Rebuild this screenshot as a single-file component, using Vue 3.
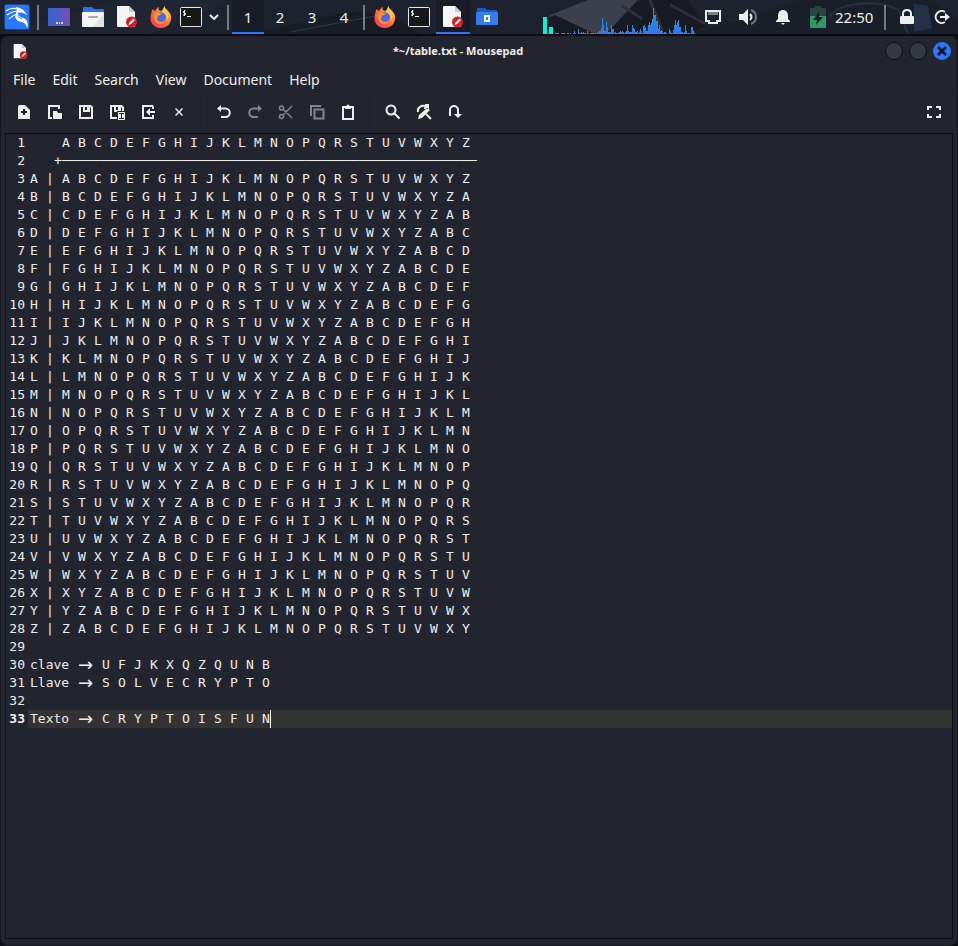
<script setup>
const alphabet = 'ABCDEFGHIJKLMNOPQRSTUVWXYZ'.split('')

const shifted = alphabet.map((letter, i) => ({
  kind: 'row',
  cells: [letter, '|', ...alphabet.slice(i), ...alphabet.slice(0, i)],
}))

const lines = [
  { kind: 'row', cells: ['', '', ...alphabet] },
  { kind: 'rule' },
  ...shifted,
  { kind: 'blank' },
  { kind: 'phrase', word: 'clave', cells: 'UFJKXQZQUNB'.split('') },
  { kind: 'phrase', word: 'Llave', cells: 'SOLVECRYPTO'.split('') },
  { kind: 'blank' },
  { kind: 'phrase', word: 'Texto', cells: 'CRYPTOISFUN'.split(''), current: true },
]
const rule = '─'.repeat(53)

const menus = ['File', 'Edit', 'Search', 'View', 'Document', 'Help']
const workspaces = [1, 2, 3, 4]

// One base-36 digit per audio band, in pixels of bar height
const bands = (
  '11010013' + '10051121' + '21103101' + '11111021' + '336g933c' + '72229551' +
  '21112323' + '21239322' + '29652231' + '25318973' + '39c9bfqj' + 'jdd59343' +
  '12210053' + '1149e9ce' + '77221293' + '11107731'
).split('').map((d) => parseInt(d, 36))

const tools = [
  [
    { name: 'New', d: 'M3 1h6l5 5v9H2V2zM7 5v2H5v2h2v2h2V9h2V7H9V5z' },
    { name: 'Open', d: 'M1 1h12v4h-2V3H3v10h2v2H1zM6 7h4l1 2h4v6H6z' },
    { name: 'Save', d: 'M1 1h12l2 2v12H1zM3 3v10h10V4l-1-1v5H5V3zM7 3h2v3H7z' },
    { name: 'Save As', d: 'M1 1h12l2 2v4h-2V4l-1-1v4H8v1H5V3H3v10h5v2H1zM7 3h2v3H7zM9 8h7v8H9zM10 9v1h2v4h-2v1h5v-1h-2v-4h2V9z' },
    { name: 'Revert', d: 'M2 1h11l1 2v2h-2V3H4v10h8v-2h2v4H2zM6 8l4-4v3h5v2h-5v3z' },
    { name: 'Close', d: 'M4 5l1-1 3 3 3-3 1 1-3 3 3 3-1 1-3-3-3 3-1-1 3-3z' },
  ],
  [
    { name: 'Undo', s: 'M4 4.500h5.500a4 4 0 0 1 0 8.500H5', d: 'M1 4.500L5 1v7z' },
    { name: 'Redo', s: 'M12 4.500H6.500a4 4 0 0 0 0 8.500H11', d: 'M15 4.500L11 1v7z', off: true },
    { name: 'Cut', s: 'M14 2L5 11M5.500 4a2 2 0 1 1-4 0 2 2 0 0 1 4 0M5.500 12.500a2 2 0 1 1-4 0 2 2 0 0 1 4 0M5 5l9 9', off: true, thin: true },
    { name: 'Copy', s: 'M2 12V2h10M5.500 5.500h9v9h-9z', off: true },
    { name: 'Paste', s: 'M3 3h10v12H3z', d: 'M5 2h1.500a1.500 1.500 0 0 1 3 0H11v3H5z' },
  ],
  [
    { name: 'Find', s: 'M10.500 6a4.500 4.500 0 1 1-9 0 4.500 4.500 0 0 1 9 0M9.500 9.500l5 5' },
    { name: 'Find and Replace', s: 'M2 8a5 5 0 0 1 8-5M10 10l5 5', d: 'M11 4l3 2-8 8-4 1 1-4zM9 0h4v5H8z' },
    { name: 'Go to', s: 'M3 12V6a4 4 0 0 1 8 0v6', d: 'M7 10h8l-4 4z' },
  ],
]
</script>

<template>
  <div class="desktop">
    <header class="panel">
      <svg class="wallpaper" viewBox="0 0 958 36" preserveAspectRatio="none" aria-hidden="true">
        <rect width="958" height="36" fill="#1e222e" />
        <path d="M0 36L120 0h110L150 36z" fill="#202532" />
        <path d="M250 36L350 12l40 4 30 20z" fill="#191c24" />
        <path d="M290 34l90-18" stroke="#23404e" />
        <path d="M550 16l38-16h50l-32 36h-60z" fill="#3b404c" />
        <path d="M543 22l12-6 40 20h-45zM638 0h50l18 28-20 8h-80z" fill="#171a22" />
        <path d="M622 6l20 14M650 0l12 32M670 5l35 20" stroke="#2b303c" stroke-width="3" />
        <path d="M690 36l60-18 50-18h130l28 20v16z" fill="#1a1e29" />
        <path d="M830 18c4-14 46-20 68-8l10 26" fill="none" stroke="#22323f" stroke-width="2" />
        <path d="M914 4l14 2 4 24-18 4z" fill="#273049" />
      </svg>

      <button class="slot" aria-label="Applications">
        <svg width="30" height="30" viewBox="0 0 30 30">
          <rect x="2" y="2" width="26" height="26" rx="3" fill="#145fd8" opacity=".5" />
          <rect x="3" y="3" width="24" height="24" rx="1" fill="#2777ff" />
          <path d="M4 9c4-3 8-3 12-2M5 13c4-3 8-4 12-4M7 17c3-3 6-5 10-5" fill="none" stroke="#fff" stroke-width="1.200" />
          <path d="M14 5c4 1 7 2 9 5l2 3-4-2c-3-1-5 0-4 2 1 3 6 2 8 6 1 3 1 5 0 7-1-4-3-6-6-6-5-1-7-5-5-9l1-3z" fill="#fff" />
          <path d="M17 10c-2 3 0 6 3 7" fill="none" stroke="#2777ff" />
        </svg>
      </button>
      <i class="bar"></i>
      <button class="slot" aria-label="Show desktop">
        <svg width="22" height="18" viewBox="0 0 22 18">
          <defs><linearGradient id="screen"><stop stop-color="#3265d0" /><stop offset="1" stop-color="#7650b5" /></linearGradient></defs>
          <rect width="22" height="18" rx="1" fill="url(#screen)" />
          <path d="M8 15h2M11 15h1M13 15h2" stroke="#fff" stroke-width="1.500" />
        </svg>
      </button>
      <button class="slot" aria-label="File manager">
        <svg width="22" height="22" viewBox="0 0 22 22">
          <path d="M1 2q0-1 1-1h8l2 2h9q1 0 1 1v4H1z" fill="#2d70e8" />
          <rect y="6" width="22" height="15" rx="1" fill="#f3f3f3" />
          <path d="M22 8v13H11z" fill="#e2e2e2" />
          <path d="M7 11h8" stroke="#aaa" stroke-width="2" stroke-linecap="round" />
        </svg>
      </button>
      <button class="slot" aria-label="Mousepad"><svg width="22" height="22" viewBox="0 0 22 22"><use href="#pad" /></svg></button>
      <button class="slot" aria-label="Firefox"><svg width="22" height="22" viewBox="0 0 22 22"><use href="#fox" /></svg></button>
      <button class="slot term" aria-label="Terminal"><svg width="22" height="20" viewBox="0 0 22 20"><use href="#term" /></svg></button>
      <button class="slot chevron" aria-label="More terminals">
        <svg width="10" height="6" viewBox="0 0 10 6"><path d="M1 1l4 4 4-4" fill="none" stroke="#f0f0f0" stroke-width="2" /></svg>
      </button>
      <i class="bar"></i>
      <nav class="spaces">
        <button v-for="n in workspaces" :key="n" :class="{ active: n === 1 }">{{ n }}</button>
      </nav>
      <i class="bar"></i>
      <button class="slot" aria-label="Firefox window"><svg width="22" height="22" viewBox="0 0 22 22"><use href="#fox" /></svg></button>
      <button class="slot" aria-label="Terminal window"><svg width="22" height="20" viewBox="0 0 22 20"><use href="#term" /></svg></button>
      <button class="slot active" aria-label="Mousepad window"><svg width="22" height="22" viewBox="0 0 22 22"><use href="#pad" /></svg></button>
      <button class="slot" aria-label="Files window">
        <svg width="22" height="18" viewBox="0 0 22 18">
          <path d="M1 1q0-1 1-1h7l2 2h9q1 0 1 1v3H1z" fill="#1f59c4" />
          <rect y="4" width="22" height="13" rx="1" fill="#367bf0" />
          <path d="M8 7h6v7H8z" fill="#fff" /><path d="M10 9h2v3h-2z" fill="#367bf0" />
        </svg>
      </button>

      <div class="visualizer" aria-hidden="true">
        <i class="beat high"></i><i class="beat low"></i><i class="beat flat"></i><i class="beat flat"></i>
        <i v-for="(h, i) in bands" :key="i" class="band" :style="{ height: h + 'px' }"></i>
      </div>

      <div class="tray">
        <button class="slot" aria-label="Network">
          <svg width="16" height="14" viewBox="0 0 16 14"><path d="M1 1h14v10h-3v2H4v-2H1z" fill="none" stroke="#eee" stroke-width="2" /><path d="M4 2v3M6 2v3M8 2v3M10 2v3M12 2v3" stroke="#ddd" /></svg>
        </button>
        <button class="slot" aria-label="Volume">
          <svg width="18" height="16" viewBox="0 0 18 16"><path d="M0 5h4l5-5v16l-5-5H0z" fill="#eee" /><path d="M11 5q3 3 0 6" stroke="#eee" stroke-width="2" fill="none" /><path d="M12 1q5 2 5 7t-5 7" stroke="#747780" stroke-width="2" fill="none" /></svg>
        </button>
        <button class="slot" aria-label="Notifications">
          <svg width="14" height="16" viewBox="0 0 14 16"><path d="M6 1h2q4 1 4 6v3l2 2v1H0v-1l2-2V7q0-5 4-6zM5 14h4l-2 2z" fill="#eee" /></svg>
        </button>
        <button class="slot" aria-label="Battery">
          <svg width="16" height="22" viewBox="0 0 16 22"><path d="M5 0h6v2h4q1 0 1 1v7H0V3q0-1 1-1h4z" fill="#24483f" /><path d="M0 10h16v11q0 1-1 1H1q-1 0-1-1z" fill="#2f9866" /><path d="M9 6l-6 8h4l-1 5 7-8H9z" fill="#171b25" /></svg>
        </button>
        <time>22:50</time>
        <i class="bar"></i>
        <button class="slot" aria-label="Lock screen">
          <svg width="14" height="16" viewBox="0 0 14 16"><path d="M3 8V5q0-4 4-4t4 4v3" fill="none" stroke="#eee" stroke-width="2" /><rect x="0" y="7" width="14" height="8" rx="1" fill="#eee" /></svg>
        </button>
        <button class="slot" aria-label="Log out">
          <svg width="16" height="14" viewBox="0 0 16 14"><path d="M11 2a6 6 0 1 0 0 10" fill="none" stroke="#eee" stroke-width="2" /><path d="M6 6h5V3l5 4-5 4V8H6z" fill="#eee" /></svg>
        </button>
      </div>

      <svg class="defs" width="0" height="0" aria-hidden="true">
        <defs>
          <linearGradient id="fire" x1="0" y1="1" x2="1" y2="0"><stop stop-color="#f82a68" /><stop offset=".5" stop-color="#ff7139" /><stop offset="1" stop-color="#ffe046" /></linearGradient>
          <g id="pad">
            <path d="M2 0h11l6 6v15H2q-1 0-1-1V1q0-1 1-1z" fill="#f5f5f5" />
            <path d="M13 0l6 6h-5q-1 0-1-1z" fill="#c9c9c9" />
            <circle cx="15.500" cy="16" r="5.500" fill="#d51f26" />
            <path d="M12.500 19l1-2.500 4-4 1.500 1.500-4 4z" fill="#fff" />
          </g>
          <g id="fox">
            <path d="M14 0c1 3 6 5 7 10 1 7-4 12-10 12S0 18 .500 11C1 7 2 6 2 3l3 2c1-2 2-3 4-4-1 3 0 3 2 4 2-1 3-3 3-5z" fill="url(#fire)" />
            <circle cx="11" cy="11" r="5" fill="#4567e8" />
            <path d="M4 7c3-2 5 0 8 0-1 2-3 2-4 3l-1 3c1 3 5 4 8 2-2 4-8 4-10 0-1-2-2-5-1-8z" fill="#ff8c2e" />
            <path d="M14 0c0 5-4 5-1 7 4 2 4 5 3 8 3-2 3-6 2-9-1-2-3-3-4-6z" fill="#ffc83b" />
          </g>
          <g id="term">
            <rect x=".500" y=".500" width="21" height="19" rx="1" fill="#181818" stroke="#e8e8e8" />
            <path d="M5.500 4H4q-1 1 0 2h1q1 1 0 2H3M4.500 3v6M7 9.500h4" fill="none" stroke="#fff" />
          </g>
        </defs>
      </svg>
    </header>

    <main class="window">
      <div class="titlebar">
        <svg class="appicon" width="15" height="15" viewBox="0 0 22 22"><use href="#pad" /></svg>
        <h1>*~/table.txt - Mousepad</h1>
        <div class="controls">
          <button aria-label="Minimize"></button>
          <button aria-label="Maximize"></button>
          <button class="close" aria-label="Close window">
            <svg width="10" height="10" viewBox="0 0 10 10"><path d="M1 1l8 8M9 1L1 9" stroke="#10131c" stroke-width="2.500" /></svg>
          </button>
        </div>
      </div>

      <nav class="menubar">
        <button v-for="m in menus" :key="m">{{ m }}</button>
      </nav>

      <div class="toolbar">
        <div v-for="(group, g) in tools" :key="g" class="group">
          <button v-for="t in group" :key="t.name" :aria-label="t.name" :disabled="t.off">
            <svg width="16" height="16" viewBox="0 0 16 16">
              <path v-if="t.s" :d="t.s" fill="none" stroke="currentColor" :stroke-width="t.thin ? 1.5 : 2" />
              <path v-if="t.d" :d="t.d" fill="currentColor" fill-rule="evenodd" />
            </svg>
          </button>
        </div>
        <button class="full" aria-label="Fullscreen">
          <svg width="14" height="12" viewBox="0 0 14 12"><path d="M1 4V1h4M9 1h4v3M13 8v3H9M5 11H1V8" fill="none" stroke="currentColor" stroke-width="2" /></svg>
        </button>
      </div>

      <div class="editor">
        <div v-for="(line, i) in lines" :key="i" class="line" :class="{ current: line.current }">
          <span class="number">{{ i + 1 }}</span>
          <div class="text">
            <template v-if="line.kind === 'rule'">
              <span class="plus">+</span><span class="dashes">{{ rule }}</span>
            </template>
            <template v-if="line.kind === 'phrase'">
              <span class="word">{{ line.word }}</span><span class="arrow">→</span>
            </template>
            <span v-for="(c, k) in line.cells" :key="k" class="cell">{{ c }}</span>
            <i v-if="line.current" class="caret"></i>
          </div>
        </div>
      </div>
    </main>
  </div>
</template>

<style>
body {
  margin: 0;
  background: #0d0f15;
}
</style>

<style scoped>
.desktop {
  display: flex;
  flex-direction: column;
  min-height: 100vh;
  font-family: "Noto Sans", sans-serif;
  color: #eeeeec;
}
button {
  margin: 0;
  padding: 0;
  border: 0;
  background: none;
  color: inherit;
  font: inherit;
  display: flex;
  align-items: center;
  justify-content: center;
}
svg {
  display: block;
  flex: none;
}
.panel {
  position: relative;
  display: flex;
  align-items: center;
  height: 34px;
  border-bottom: 2px solid #090b10;
}
.panel > * {
  position: relative;
  flex: none;
}
.panel > .wallpaper {
  position: absolute;
  inset: 0;
  width: 100%;
  height: 34px;
}
.panel > .defs {
  position: absolute;
}
.slot {
  width: 34px;
  height: 34px;
}
.bar {
  width: 2px;
  height: 25px;
  margin: 0 3px;
  background: #777a82;
}
.panel > .term {
  width: 26px;
}
.panel > .chevron {
  width: 20px;
}
.spaces {
  display: flex;
}
.spaces button {
  width: 32px;
  height: 34px;
  font-size: 15px;
}
.active {
  background: #191c27;
  box-shadow: inset 0 -2px #2777ff;
}
.visualizer {
  display: flex;
  align-items: flex-end;
  height: 34px;
  margin-left: 39px;
}
.beat {
  width: 4px;
  margin-right: 2px;
  background: #00f5d8;
}
.high {
  height: 17px;
}
.low {
  height: 7px;
}
.flat {
  height: 1px;
  background: #16a695;
}
.band {
  width: 1px;
  background: linear-gradient(to top, #2d74f5, #238de8);
}
.tray {
  display: flex;
  align-items: center;
  margin-left: auto;
  padding-right: 2px;
}
.tray .slot {
  width: 35px;
}
.tray time {
  padding: 0 8px 0 0;
  font-size: 15px;
  line-height: 34px;
}

.window {
  flex: 1;
  display: flex;
  flex-direction: column;
  padding: 0 4px 6px;
  border: 1px solid #15171e;
  border-top: 0;
  border-radius: 8px;
  background: #23252e;
}
.titlebar {
  display: grid;
  grid-template-columns: 1fr auto 1fr;
  align-items: center;
  height: 30px;
}
.appicon {
  margin-left: 8px;
}
h1 {
  margin: 0;
  padding-right: 42px;
  font-size: 11px;
  font-weight: 700;
  line-height: 16px;
}
.controls {
  display: flex;
  justify-content: flex-end;
  gap: 6px;
  padding-right: 2px;
}
.controls button {
  width: 18px;
  height: 18px;
  box-sizing: border-box;
  border: 1px solid #0b0d12;
  border-radius: 50%;
  background: #353945;
}
.controls .close {
  border-color: #2777ff;
  background: #2777ff;
}
.menubar {
  display: flex;
  gap: 1px;
  height: 26px;
  border-bottom: 1px solid #1f2129;
}
.menubar button {
  padding: 0 8px;
  font-size: 14px;
}
.toolbar {
  display: flex;
  align-items: center;
  height: 38px;
  padding-bottom: 2px;
}
.group {
  display: flex;
  padding: 0 6px 0 3px;
}
.group + .group {
  padding-left: 7px;
  border-left: 1px solid #1f2129;
}
.group button {
  width: 31px;
  height: 32px;
}
.group button:disabled {
  color: #84868b;
}
.toolbar .full {
  margin-left: auto;
  width: 38px;
  height: 32px;
}
.editor {
  flex: 1;
  border: 1px solid #0d0f14;
  font-family: "DejaVu Sans Mono", monospace;
  font-size: 13px;
  line-height: 18px;
}
.line {
  display: flex;
  height: 18px;
}
.number {
  width: 19px;
  margin-right: 3px;
  text-align: right;
}
.text {
  flex: 1;
  display: flex;
  padding-left: 2px;
  white-space: pre;
}
.current .number {
  font-weight: 700;
}
.current .text {
  background: #333333;
}
.cell {
  width: 16px;
}
.plus {
  width: 8px;
  margin-left: 24px;
}
.word {
  width: 48px;
}
.arrow {
  width: 24px;
  font-family: "DejaVu Sans", sans-serif;
  font-size: 18px;
}
.caret {
  width: 1px;
  margin-left: -8px;
  background: #ffffff;
}
</style>
